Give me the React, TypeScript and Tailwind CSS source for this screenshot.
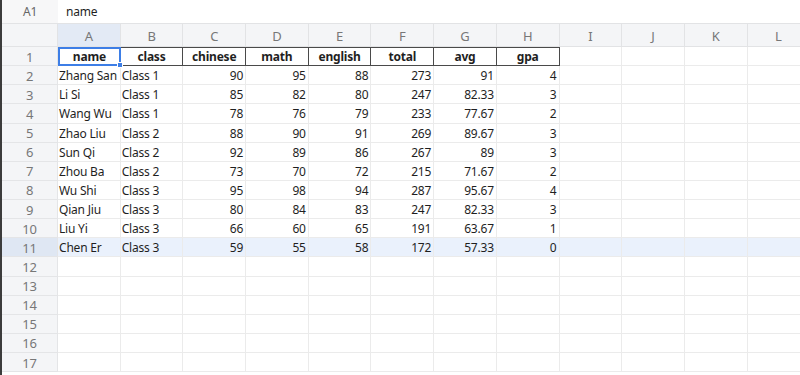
import React from 'react';

const columns = ['A', 'B', 'C', 'D', 'E', 'F', 'G', 'H', 'I', 'J', 'K', 'L'];
const headers = ['name', 'class', 'chinese', 'math', 'english', 'total', 'avg', 'gpa'];

const rows: (string | number)[][] = [
  ['Zhang San', 'Class 1', 90, 95, 88, 273, 91, 4],
  ['Li Si', 'Class 1', 85, 82, 80, 247, 82.33, 3],
  ['Wang Wu', 'Class 1', 78, 76, 79, 233, 77.67, 2],
  ['Zhao Liu', 'Class 2', 88, 90, 91, 269, 89.67, 3],
  ['Sun Qi', 'Class 2', 92, 89, 86, 267, 89, 3],
  ['Zhou Ba', 'Class 2', 73, 70, 72, 215, 71.67, 2],
  ['Wu Shi', 'Class 3', 95, 98, 94, 287, 95.67, 4],
  ['Qian Jiu', 'Class 3', 80, 84, 83, 247, 82.33, 3],
  ['Liu Yi', 'Class 3', 66, 60, 65, 191, 63.67, 1],
  ['Chen Er', 'Class 3', 59, 55, 58, 172, 57.33, 0],
];

const gridCols = 'grid grid-cols-[56px_repeat(12,62.7px)]';

const RowHead = ({ n, hot }: { n: number; hot?: boolean }) => (
  <div
    className={`flex h-[19.13px] items-center justify-center border-b border-r border-[#e4e5e7] pt-[2px] text-[13px] leading-none text-[#777] ${
      hot ? 'bg-[#dfe7f3]' : 'bg-[#f4f5f7]'
    }`}
  >
    {n}
  </div>
);

const App = () => {
  return (
    <div className="h-[375px] w-[800px] overflow-hidden border-l-2 border-[#3c3c3c] bg-white font-['Noto_Sans',sans-serif] text-[12px] tracking-[-0.2px] text-[#1f1f1f]">
      {/* formula bar */}
      <div className="flex h-[24px] border-b border-[#e2e3e5]">
        <div className="flex w-[56px] items-center justify-center bg-[#f7f7f8] text-[12px] text-[#666]">A1</div>
        <div className="flex items-center pl-[8px] text-[12px]">name</div>
      </div>

      {/* column headers */}
      <div className={gridCols}>
        <div className="h-[23px] border-b border-r border-[#e2e3e5] bg-[#f4f5f7]" />
        {columns.map((c, i) => (
          <div
            key={c}
            className={`flex h-[23px] items-center justify-center border-b border-r border-[#e2e3e5] pt-[2px] text-[13px] leading-none text-[#777] ${
              i === 0 ? 'bg-[#e3eaf5]' : 'bg-[#f4f5f7]'
            }`}
          >
            {c}
          </div>
        ))}
      </div>

      {/* header row */}
      <div className={gridCols}>
        <RowHead n={1} />
        {columns.map((c, i) => {
          if (i === 0)
            return (
              <div
                key={c}
                className="relative flex h-[19.13px] items-center justify-center border-2 border-[#3d7ee6] pt-[1px] font-bold leading-none"
              >
                {headers[i]}
                <span className="absolute -right-[4px] -bottom-[4px] h-[6px] w-[6px] border border-white bg-[#3d7ee6]" />
              </div>
            );
          if (i < 8)
            return (
              <div
                key={c}
                className="flex h-[19.13px] items-center justify-center border-b border-r border-t border-[#4a4a4a] pt-[1px] font-bold leading-none"
              >
                {headers[i]}
              </div>
            );
          return <div key={c} className="h-[19.13px] border-b border-r border-[#ebebeb]" />;
        })}
      </div>

      {/* data rows */}
      {rows.map((r, ri) => {
        const hot = ri === rows.length - 1;
        return (
          <div key={ri} className={`${gridCols} ${hot ? 'bg-[#eaf1fc]' : ''}`}>
            <RowHead n={ri + 2} hot={hot} />
            {columns.map((c, ci) => {
              const v = r[ci];
              const isNum = typeof v === 'number';
              return (
                <div
                  key={c}
                  className={`flex h-[19.13px] items-center border-b border-r border-[#ebebeb] pt-[2px] leading-none ${
                    isNum ? 'justify-end pr-[2px]' : 'pl-[1px]'
                  }`}
                >
                  {v ?? ''}
                </div>
              );
            })}
          </div>
        );
      })}

      {/* empty rows */}
      {[12, 13, 14, 15, 16, 17].map((n) => (
        <div key={n} className={gridCols}>
          <RowHead n={n} />
          {columns.map((c) => (
            <div key={c} className="h-[19.13px] border-b border-r border-[#ebebeb]" />
          ))}
        </div>
      ))}
    </div>
  );
};

export default App;
